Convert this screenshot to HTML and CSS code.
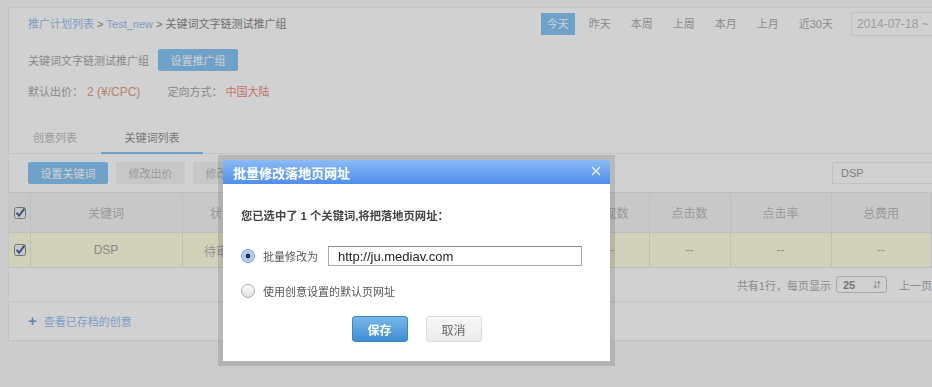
FILE: index.html
```html
<!DOCTYPE html>
<html lang="zh-CN">
<head>
  <meta charset="UTF-8" />
  <meta name="viewport" content="width=device-width, initial-scale=1.0" />
  <title>关键词文字链测试推广组 - 关键词列表</title>
  <link rel="stylesheet" href="styles.css">
</head>
<body>

  <div class="panel">
    <div class="head">
      <div class="crumbs">
        <a class="link">推广计划列表</a> &gt; <a class="link">Test_new</a> &gt; 关键词文字链测试推广组
      </div>
      <div class="ranges">
        <span class="range active">今天</span>
        <span class="range">昨天</span>
        <span class="range">本周</span>
        <span class="range">上周</span>
        <span class="range">本月</span>
        <span class="range">上月</span>
        <span class="range">近30天</span>
        <div class="date">2014-07-18 ~ 2014-07-18</div>
      </div>
    </div>

    <div class="group-row">
      <span class="label">关键词文字链测试推广组</span>
      <button class="btn btn-blue">设置推广组</button>
    </div>

    <div class="meta">
      <span>默认出价：</span><span class="price">2 (¥/CPC)</span>
      <span class="meta-gap">定向方式：</span><span class="region">中国大陆</span>
    </div>

    <div class="tabs">
      <span class="tab">创意列表</span>
      <span class="tab active">关键词列表</span>
    </div>

    <div class="toolbar">
      <button class="btn btn-blue">设置关键词</button>
      <button class="btn btn-grey">修改出价</button>
      <button class="btn btn-grey">修改网址</button>
      <input class="search" type="text" value="DSP" />
    </div>

    <table class="grid">
      <colgroup>
        <col style="width:21px"><col style="width:152px"><col style="width:80px"><col style="width:150px">
        <col style="width:160px"><col style="width:77px"><col style="width:81px"><col style="width:101px">
        <col style="width:100px"><col style="width:110px">
      </colgroup>
      <thead>
        <tr>
          <th class="chk">
            <svg width="12" height="12" viewBox="0 0 12 12"><rect x="0.5" y="0.5" width="11" height="11" rx="2" fill="#f4f4f4" stroke="#8c8c8c"/><path d="M2.6 5.8 L5 8.8 L10.4 1.6" fill="none" stroke="#3c5e96" stroke-width="1.8"/></svg>
          </th>
          <th>关键词</th>
          <th>状态</th>
          <th>出价</th>
          <th>质量度</th>
          <th>展现数</th>
          <th>点击数</th>
          <th>点击率</th>
          <th>总费用</th>
          <th>操作</th>
        </tr>
      </thead>
      <tbody>
        <tr class="picked">
          <td class="chk">
            <svg width="12" height="12" viewBox="0 0 12 12"><rect x="0.5" y="0.5" width="11" height="11" rx="2" fill="#f4f4f4" stroke="#8c8c8c"/><path d="M2.6 5.8 L5 8.8 L10.4 1.6" fill="none" stroke="#3c5e96" stroke-width="1.8"/></svg>
          </td>
          <td>DSP</td>
          <td>待审核</td>
          <td>2.00</td>
          <td>--</td>
          <td>--</td>
          <td>--</td>
          <td>--</td>
          <td>--</td>
          <td>编辑</td>
        </tr>
      </tbody>
    </table>

    <div class="pager">
      <span>共有1行，每页显示</span>
      <span class="per-page">25 <span class="arrows">&#8693;</span></span>
      <span class="page-link">上一页</span>
      <span class="page-link">下一页</span>
    </div>

    <div class="foot">
      <span class="plus">+</span><span class="link">查看已存档的创意</span>
    </div>
  </div>

  <div class="mask"></div>

  <div class="dialog">
    <div class="dialog-head">
      <span>批量修改落地页网址</span>
      <svg class="close" width="10" height="10" viewBox="0 0 10 10"><path d="M1 1 L9 9 M9 1 L1 9" stroke="#eef4ff" stroke-width="1.3"/></svg>
    </div>
    <div class="dialog-body">
      <p class="intro">您已选中了 1 个关键词,将把落地页网址：</p>
      <div class="option">
        <span class="radio on"></span>
        <span>批量修改为</span>
        <input class="url" type="text" value="http://ju.mediav.com" />
      </div>
      <div class="option">
        <span class="radio"></span>
        <span>使用创意设置的默认页网址</span>
      </div>
      <div class="actions">
        <button class="act save">保存</button>
        <button class="act cancel">取消</button>
      </div>
    </div>
  </div>

</body>
</html>
```

FILE: styles.css
```css
html, body {
  overflow: hidden;
}
body {
  font-family: 'Liberation Sans', 'Noto Sans CJK SC', sans-serif;
  font-size: 11px;
  background-color: #f8f8f8;
  margin: 0;
  padding: 7px 0 0 8px;
  height: 380px;
  color: #a8a8a8;
}
.panel {
  box-sizing: border-box;
  width: 1034px;
  background: white;
  border: 1px solid #f0f0f0;
  padding-top: 4px;
}
.head {
  display: flex;
  align-items: center;
  height: 24px;
  padding: 0 20px 0 19px;
}
.crumbs {
  flex: 1;
  color: #888;
  line-height: 16px;
}
.link {
  color: #9bc2f2;
}
.ranges {
  display: flex;
  align-items: center;
  gap: 8px;
}
.range {
  padding: 0 6px;
  height: 22px;
  line-height: 22px;
  color: #acacac;
}
.range.active {
  background-color: #88c6f4;
  color: white;
}
.date {
  margin-left: 4px;
  box-sizing: border-box;
  width: 170px;
  height: 24px;
  line-height: 22px;
  border: 1px solid #ececec;
  padding-left: 5px;
  font-size: 12px;
  color: #c3c3c3;
  white-space: nowrap;
  overflow: hidden;
}
.group-row {
  display: flex;
  align-items: center;
  gap: 9px;
  margin-top: 13px;
  padding-left: 19px;
}
.btn {
  font-family: inherit;
  font-size: 11px;
  height: 22px;
  padding: 0 12.5px;
  border: none;
  border-radius: 2px;
  cursor: pointer;
}
.btn-blue {
  background-color: #88c6f4;
  color: white;
}
.btn-grey {
  background-color: #f3f3f3;
  color: #bcbcbc;
}
.meta {
  margin-top: 14px;
  padding-left: 19px;
  line-height: 14px;
}
.price {
  margin-left: 4px;
  font-size: 12px;
  color: #dda286;
}
.meta-gap {
  margin-left: 24px;
}
.region {
  margin-left: 3px;
  color: #f08a84;
}
.tabs {
  display: flex;
  margin-top: 25px;
  border-bottom: 1px solid #f0f0f0;
}
.tab {
  height: 28px;
  line-height: 28px;
  padding: 0 24px;
  color: #bebebe;
  border-bottom: 2px solid transparent;
  margin-bottom: -1px;
}
.tab.active {
  color: #919191;
  border-bottom-color: #87c5f5;
  padding: 0 23.5px;
}
.toolbar {
  display: flex;
  align-items: center;
  gap: 8px;
  padding: 8px 20px 8px 19px;
}
.search {
  margin-left: auto;
  box-sizing: border-box;
  width: 189px;
  height: 22px;
  border: 1px solid #ececec;
  padding: 0 8px;
  font-family: inherit;
  font-size: 11px;
  color: #999;
  outline: none;
}
.grid {
  width: 1032px;
  table-layout: fixed;
  border-collapse: collapse;
  font-size: 12px;
}
.grid th, .grid td {
  border: 1px solid #e8e8e8;
  text-align: center;
  white-space: nowrap;
  overflow: hidden;
}
.grid tr > :first-child {
  border-left: none;
}
.grid th {
  height: 37px;
  background-color: #f5f5f5;
  font-weight: normal;
  color: #bcbcbc;
}
.grid td {
  height: 32px;
  color: #b4b4b4;
}
.grid td:nth-child(2) {
  color: #a8a8a8;
}
.picked td {
  background-color: #fffee2;
}
.chk svg {
  display: block;
  margin-left: 4px;
}
.pager {
  display: flex;
  justify-content: flex-end;
  align-items: center;
  height: 33px;
  padding-right: 64px;
  border-bottom: 1px solid #f0f0f0;
  color: #ababab;
}
.per-page {
  display: flex;
  justify-content: space-between;
  align-items: center;
  box-sizing: border-box;
  width: 51px;
  height: 17px;
  margin-left: 5px;
  padding: 0 5px 0 6px;
  border: 1px solid #cdcdcd;
  border-radius: 3px;
  font-weight: bold;
  color: #919191;
}
.arrows {
  font-size: 8px;
  font-weight: normal;
}
.page-link {
  margin-left: 12px;
}
.foot {
  display: flex;
  align-items: center;
  gap: 7px;
  height: 38px;
  padding-left: 19px;
}
.plus {
  color: #70a8dd;
  font-size: 15px;
  font-weight: bold;
  line-height: 14px;
}
.mask {
  position: fixed;
  inset: 0;
  background: rgba(0, 0, 0, 0.18);
}
.dialog {
  position: fixed;
  left: 223px;
  top: 160px;
  width: 387px;
  background: white;
  box-shadow: 0 0 0 5px rgba(0, 0, 0, 0.12);
  color: #555;
}
.dialog-head {
  display: flex;
  justify-content: space-between;
  align-items: center;
  height: 24px;
  padding: 0 9px 0 10px;
  background: linear-gradient(#8bbaf7, #4f8fea);
  color: white;
  font-size: 13px;
  font-weight: bold;
}
.close {
  margin-top: -3px;
}
.dialog-body {
  padding: 24px 19px 19px 18px;
}
.intro {
  margin: 0;
  font-size: 11.3px;
  line-height: 16px;
  font-weight: bold;
  color: #444;
}
.option {
  display: flex;
  align-items: center;
  height: 20px;
  margin-top: 15px;
  font-size: 11px;
}
.intro + .option {
  margin-top: 22px;
}
.radio {
  box-sizing: border-box;
  width: 14px;
  height: 14px;
  border-radius: 50%;
  border: 1px solid #aaa;
  background: linear-gradient(#fff, #dedede);
  margin-right: 8px;
}
.radio.on {
  border-color: #7d95bb;
  background: radial-gradient(circle, #1d2838 0 2px, #9cc3ee 2.5px, #d6e6f8 100%);
}
.url {
  box-sizing: border-box;
  width: 254px;
  height: 20px;
  margin-left: 10px;
  padding: 0 9px;
  border: 1px solid #a9a9a9;
  border-top-color: #8e8e8e;
  font-family: 'Liberation Sans', sans-serif;
  font-size: 13px;
  color: #222;
  outline: none;
}
.actions {
  display: flex;
  justify-content: center;
  gap: 18px;
  margin-top: 15px;
  padding-left: 1px;
}
.act {
  width: 56px;
  height: 26px;
  border-radius: 3px;
  font-family: inherit;
  font-size: 12px;
  cursor: pointer;
}
.save {
  background: linear-gradient(#78b8ea, #3f8ed2);
  border: 1px solid #3b84c4;
  color: white;
  font-weight: bold;
}
.cancel {
  background: linear-gradient(#f8f8f8, #ececec);
  border: 1px solid #dcdcdc;
  color: #666;
}
```
